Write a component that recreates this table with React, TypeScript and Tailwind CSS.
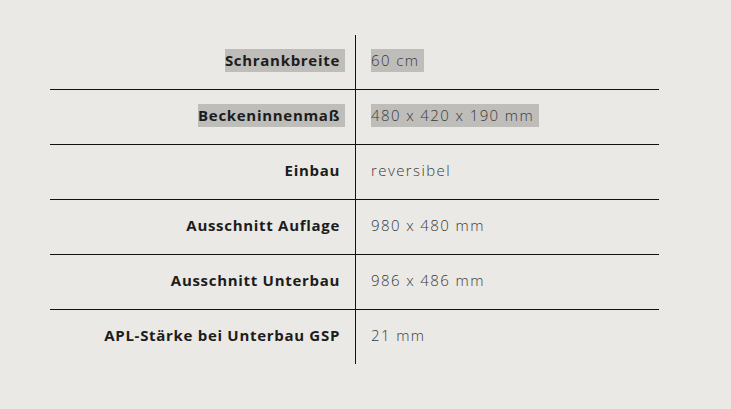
import React from "react";

const rows = [
  { label: "Schrankbreite", value: "60 cm", selected: true },
  { label: "Beckeninnenmaß", value: "480 x 420 x 190 mm", selected: true },
  { label: "Einbau", value: "reversibel" },
  { label: "Ausschnitt Auflage", value: "980 x 480 mm" },
  { label: "Ausschnitt Unterbau", value: "986 x 486 mm" },
  { label: "APL-Stärke bei Unterbau GSP", value: "21 mm" },
];

const App = () => {
  return (
    <div
      className="min-h-[409px] w-full bg-[#eae9e5] pt-[35px] pl-[50px]"
      style={{ fontFamily: '"Open Sans", "Liberation Sans", sans-serif' }}
    >
      <div className="w-[609px]">
        {rows.map((row, i) => (
          <div
            key={row.label}
            className={
              i < rows.length - 1
                ? "grid h-[55px] grid-cols-[305px_1fr] border-b border-[#111]"
                : "grid h-[54px] grid-cols-[305px_1fr]"
            }
          >
            <div className="flex items-center justify-end pr-[15px] pb-[3px] text-[15px] font-bold tracking-[0.7px] text-[#1c1c1c]">
              {row.selected ? (
                <span className="mr-[-5px] bg-[#bebdba] pr-[5px] leading-[23px]">
                  {row.label}
                </span>
              ) : (
                <span className="leading-[23px]">{row.label}</span>
              )}
            </div>
            <div className="flex items-center border-l border-[#111] pl-[15px] pb-[3px] text-[15px] font-light tracking-[1.4px] text-[#3a3a3a]">
              {row.selected ? (
                <span className="bg-[#bebdba] pr-[5px] leading-[23px]">
                  {row.value}
                </span>
              ) : (
                <span className="leading-[23px]">{row.value}</span>
              )}
            </div>
          </div>
        ))}
      </div>
    </div>
  );
};

export default App;
